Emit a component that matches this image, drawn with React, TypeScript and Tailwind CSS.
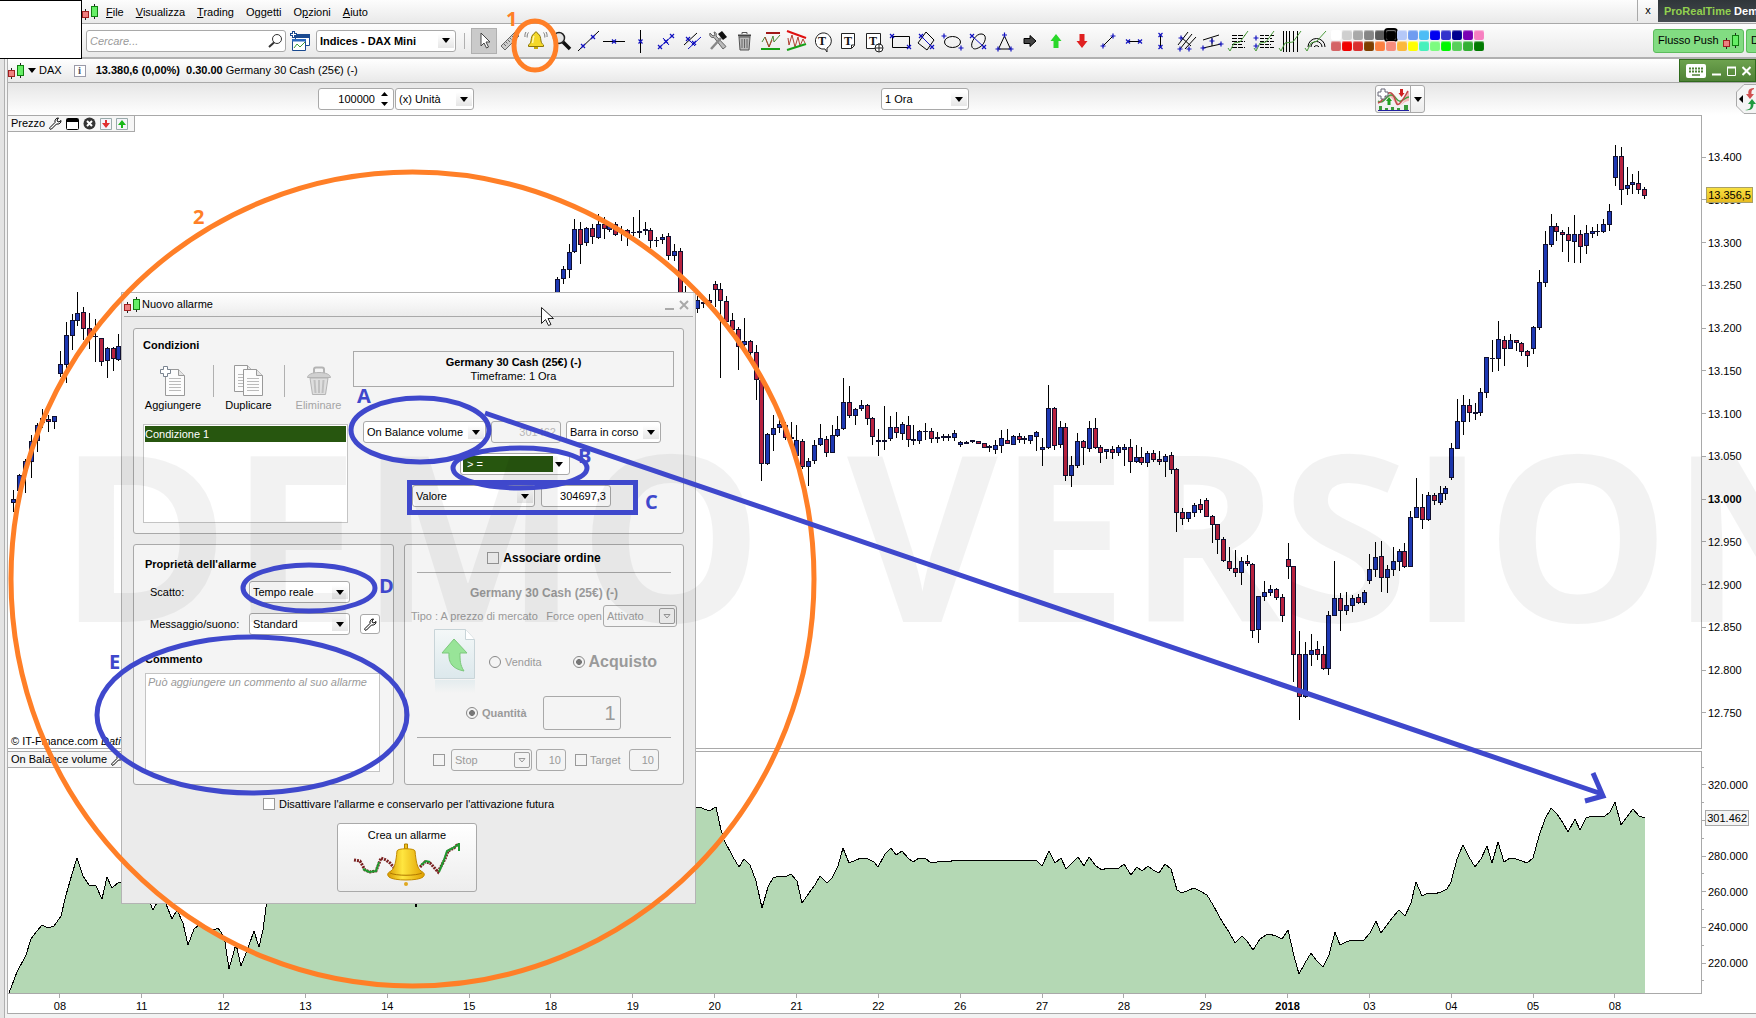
import React, { useState } from "react";
import clsx from "clsx";

type Bar = [number, number, number, number, number];

// high, body top, body bottom, low (ticks below the series origin), 1 = up, 0 = down, 2 = flat
const TICKS = 3;
const SERIES: { start: number; origin: number; bars: Bar[] }[] = [
  {
    start: -8,
    origin: 280,
    bars: [
      [630, 658, 670, 695, 1], [582, 586, 632, 662, 1], [537, 544, 574, 640, 1], [465, 484, 545, 594, 1],
      [430, 436, 482, 516, 1], [388, 415, 430, 445, 1], [404, 418, 425, 456, 0], [408, 409, 425, 446, 1],
      [213, 253, 281, 290, 1], [126, 166, 254, 308, 1], [103, 121, 167, 210, 1], [36, 99, 122, 138, 1],
      [82, 97, 146, 180, 0], [98, 145, 168, 207, 0], [118, 168, 172, 246, 2], [175, 175, 245, 258, 0],
      [202, 205, 242, 293, 1], [202, 205, 236, 272, 0], [163, 199, 239, 242, 1],
    ],
  },
  {
    start: 85,
    origin: 190,
    bars: [
      [262, 268, 340, 350, 1], [229, 238, 268, 281, 1], [163, 187, 239, 263, 1], [88, 118, 187, 190, 1],
      [96, 118, 164, 222, 0], [110, 115, 160, 168, 1], [103, 115, 140, 162, 0], [72, 103, 143, 147, 1],
      [82, 103, 118, 147, 0], [95, 103, 120, 125, 1], [95, 103, 134, 138, 0], [108, 121, 130, 152, 0],
      [118, 121, 137, 168, 0], [80, 127, 130, 138, 2], [60, 124, 130, 143, 1], [96, 118, 122, 134, 2],
      [115, 121, 152, 174, 0], [140, 151, 154, 172, 2], [132, 142, 151, 162, 1], [129, 139, 197, 209, 0],
      [163, 184, 197, 213, 1], [175, 184, 310, 320, 0], [288, 320, 345, 355, 0], [330, 340, 350, 360, 0],
      [318, 331, 356, 368, 1], [330, 335, 342, 354, 0], [312, 330, 340, 350, 0], [273, 283, 299, 350, 0],
      [279, 298, 332, 564, 0], [318, 333, 396, 405, 0], [369, 391, 419, 430, 0], [411, 418, 470, 540, 0],
      [384, 454, 466, 470, 1], [450, 454, 488, 500, 0], [465, 487, 569, 630, 0], [569, 570, 821, 873, 0],
      [729, 733, 821, 825, 1], [674, 715, 734, 784, 1], [690, 703, 715, 730, 1], [695, 705, 745, 750, 0],
      [697, 742, 748, 765, 0], [706, 751, 797, 800, 1], [748, 754, 832, 836, 0], [805, 814, 832, 888, 1],
      [750, 766, 812, 821, 1], [702, 745, 766, 768, 1], [739, 748, 788, 802, 0], [706, 736, 788, 790, 1],
      [678, 718, 737, 740, 1], [564, 637, 718, 720, 1], [588, 637, 677, 683, 0], [655, 658, 677, 704, 1],
      [630, 646, 658, 662, 1], [643, 646, 686, 705, 0], [680, 685, 740, 764, 0], [716, 751, 757, 798, 0],
      [648, 751, 757, 780, 1], [679, 712, 748, 752, 1],
    ],
  },
  {
    start: 143,
    origin: 370,
    bars: [
      [127, 172, 188, 203, 0], [155, 163, 191, 209, 1], [138, 166, 209, 231, 0], [165, 208, 212, 224, 2],
      [180, 184, 212, 221, 1], [159, 183, 186, 209, 2], [175, 184, 206, 218, 0], [186, 202, 206, 219, 2],
      [193, 199, 203, 213, 2], [193, 199, 203, 212, 2], [180, 190, 203, 212, 1], [213, 217, 224, 230, 1],
      [214, 217, 221, 222, 2], [210, 211, 215, 218, 2], [213, 214, 221, 222, 0], [219, 220, 233, 234, 0],
      [225, 229, 233, 246, 2], [210, 226, 239, 251, 1], [181, 205, 227, 248, 1], [176, 211, 221, 222, 0],
      [196, 199, 224, 225, 1], [189, 199, 209, 219, 0], [197, 205, 211, 222, 0], [195, 196, 212, 221, 1],
      [182, 187, 200, 243, 1], [204, 232, 239, 288, 1], [45, 115, 233, 238, 1], [111, 115, 227, 239, 0],
      [153, 172, 224, 234, 1], [160, 172, 317, 334, 0], [258, 286, 317, 351, 1], [190, 214, 287, 293, 1],
      [211, 214, 233, 285, 0], [153, 175, 236, 246, 1], [144, 175, 233, 236, 0], [226, 232, 248, 279, 0],
      [236, 238, 245, 267, 1], [228, 238, 248, 267, 0], [225, 232, 248, 258, 1], [222, 232, 239, 288, 1],
      [207, 232, 275, 309, 0], [224, 262, 275, 278, 1], [231, 262, 278, 284, 0], [244, 250, 278, 291, 1],
      [240, 250, 269, 275, 0], [243, 268, 275, 286, 0], [252, 259, 275, 321, 1], [246, 256, 299, 311, 0],
      [294, 298, 428, 486, 0], [414, 427, 446, 465, 0], [427, 427, 446, 455, 1], [400, 406, 428, 440, 1],
      [387, 403, 419, 430, 0], [384, 391, 440, 442, 0], [434, 439, 464, 518, 0], [462, 463, 509, 552, 0],
      [502, 508, 572, 575, 0], [531, 574, 596, 603, 0], [540, 595, 608, 620, 0], [561, 574, 608, 645, 1],
      [555, 574, 581, 587, 0], [579, 583, 782, 804, 0], [678, 679, 779, 819, 1], [633, 667, 680, 694, 1],
      [645, 658, 668, 678, 1], [653, 658, 683, 690, 0], [673, 682, 737, 756, 0], [519, 568, 590, 627, 0],
    ],
  },
  {
    start: 211,
    origin: 530,
    bars: [
      [109, 109, 374, 456, 0], [303, 373, 500, 570, 0], [336, 373, 500, 504, 1], [312, 361, 374, 407, 1],
      [333, 358, 374, 389, 0], [349, 373, 416, 419, 0], [243, 256, 416, 434, 1], [93, 205, 257, 258, 1],
      [190, 205, 242, 302, 0], [186, 226, 242, 254, 1], [195, 205, 227, 245, 1], [193, 202, 218, 221, 0],
      [180, 187, 218, 224, 1], [72, 118, 152, 161, 1], [36, 82, 119, 140, 1], [33, 79, 143, 185, 0],
      [105, 118, 143, 188, 1], [51, 94, 119, 139, 1], [57, 64, 95, 122, 1], [39, 64, 110, 114, 0],
      [-57, -38, 110, 111, 1],
    ],
  },
  {
    start: 232,
    origin: 130,
    bars: [
      [1044, 1132, 1163, 1165, 1], [1092, 1132, 1169, 1196, 0], [1086, 1096, 1169, 1174, 1], [1089, 1096, 1112, 1124, 0],
      [1068, 1090, 1118, 1124, 1], [1067, 1075, 1091, 1110, 1], [939, 955, 1043, 1049, 1], [807, 874, 956, 957, 1],
      [795, 826, 875, 914, 1], [807, 826, 848, 876, 0], [819, 847, 851, 869, 2], [774, 787, 848, 857, 1],
      [681, 682, 788, 803, 1], [630, 684, 687, 726, 2], [573, 628, 686, 723, 1], [618, 631, 656, 708, 0],
      [612, 631, 656, 657, 1], [630, 631, 638, 663, 0], [636, 640, 665, 678, 0], [660, 664, 677, 711, 0],
      [588, 592, 656, 672, 1], [420, 457, 593, 600, 1], [303, 343, 458, 470, 1], [252, 289, 344, 351, 1],
      [279, 289, 305, 333, 0], [300, 307, 314, 366, 0], [291, 313, 332, 396, 0], [255, 313, 335, 399, 1],
      [300, 313, 350, 399, 0], [285, 310, 347, 372, 1], [291, 304, 311, 324, 1], [282, 303, 307, 318, 2],
      [267, 283, 305, 308, 1], [222, 244, 284, 302, 1], [45, 79, 143, 168, 1], [51, 79, 179, 225, 0],
      [111, 166, 176, 195, 1], [132, 157, 164, 192, 1], [123, 160, 179, 192, 0], [171, 178, 197, 207, 0],
    ],
  },
];

const OBV =
  "9,993 17,972 26,955 31,939 37,931 42,925 48,928 54,926 61,916 66,895 72,874 77,858 83,876 89,885 96,886 102,899 107,877 112,888 119,882 125,884 140,890 150,903 153,910 160,897 166,904 172,919 177,910 183,923 188,945 194,929 200,924 206,928 214,930 218,928 221,932 225,942 229,969 236,944 241,966 248,948 254,931 259,947 263,930 267,900 269,880 410,880 414,900 416,907 419,899 430,870 690,807 " +
  "696,807 702,808 709,811 716,807 721,830 724,840 733,857 739,867 744,859 750,865 756,881 762,908 768,887 773,878 779,876 785,877 791,874 797,881 802,903 809,893 815,885 820,876 827,883 832,878 838,866 843,848 849,863 856,860 861,858 868,859 874,862 878,867 885,854 891,848 896,855 902,851 908,858 913,862 919,858 925,858 931,863 937,862 943,861 949,862 954,860 1036,860 1042,866 1049,851 1055,863 1061,858 1066,869 1072,863 1078,857 1084,866 1089,857 1096,866 1102,870 1107,868 1112,869 1119,868 1124,864 1131,875 1137,867 1142,871 1148,866 1153,870 1159,873 1165,864 1171,869 1177,890 1182,893 1189,890 1194,888 1200,891 1207,895 1213,905 1218,914 1223,923 1229,932 1235,943 1242,936 1247,941 1253,950 1260,939 1266,935 1269,934 1276,936 1282,939 1288,930 " +
  "1294,956 1299,974 1305,963 1311,953 1317,961 1323,967 1329,955 1335,932 1340,945 1346,942 1352,940 1358,941 1364,940 1370,933 1376,921 1381,933 1387,925 1393,917 1399,910 1405,916 1411,903 1416,882 1422,896 1428,893 1434,894 1441,892 1447,889 1451,882 1457,859 1463,845 1469,857 1475,867 1481,859 1487,846 1492,863 1498,842 1504,862 1510,858 1516,859 1522,861 1527,863 1533,858 1539,836 1545,819 1551,808 1557,814 1563,823 1568,832 1575,819 1580,830 1586,818 1592,816 1600,817 1605,816 1610,812 1615,802 1621,825 1627,817 1633,809 1639,816 1645,818";

const PRICES = ["13.400", "13.350", "13.300", "13.250", "13.200", "13.150", "13.100", "13.050", "13.000", "12.950", "12.900", "12.850", "12.800", "12.750"];
const VOLUMES = ["", "320.000", "", "300.000", "", "280.000", "", "260.000", "", "240.000", "", "220.000", ""];
const DAYS = ["08", "11", "12", "13", "14", "15", "18", "19", "20", "21", "22", "26", "27", "28", "29", "2018", "03", "04", "05", "08"];

const SWATCHES = [
  ["#ffffff", "#cfcfcf", "#a9a9a9", "#858585", "#5a5a5a", "#000000", "#b4c8f8", "#6f9cf0", "#4dbdf5", "#0000f0", "#3333cc", "#000090", "#7a00b4", "#f77fc0"],
  ["#d46466", "#f00000", "#d93030", "#7e3f00", "#fb8040", "#f68c7c", "#fbb93c", "#ffff00", "#48f0bc", "#7dfc80", "#00f800", "#58d05a", "#33b033", "#007a00"],
];

function Candles() {
  return (
    <svg width="16" height="16" viewBox="0 0 16 16" className="shrink-0">
      <path d="M3.5 5v11M12.5 0v15" stroke="#222" />
      <rect x="0.5" y="7.5" width="6" height="6" fill="#ee8080" stroke="#a02020" />
      <rect x="9.5" y="2.5" width="6" height="10" fill="#66ee66" stroke="#108010" />
    </svg>
  );
}

function Caret() {
  return (
    <svg width="8" height="5" viewBox="0 0 8 5" className="shrink-0">
      <path d="M0 0h8L4 5z" fill="#000" />
    </svg>
  );
}

function Wrench() {
  return (
    <svg width="13" height="13" viewBox="0 0 13 13" className="shrink-0">
      <path d="M1 10.5 6 5.5C5.500 3 7 .8 9.500 1L8 3l.5 1.500L10 5l2-1.500c.3 2.500-2 4-4.500 3.500l-5 5C1.500 13 0 11.500 1 10.500z" fill="#fff" stroke="#000" />
    </svg>
  );
}

function Select({ label, value, className, disabled }: { label: string; value: string; className: string; disabled?: boolean }) {
  return (
    <span className={clsx("relative block h-[22px] shrink-0", className)}>
      <select
        aria-label={label}
        disabled={disabled}
        className={clsx(
          "block h-full w-full appearance-none rounded-[3px] border border-[#a9a9a9] pl-[3px] pr-5 leading-4",
          disabled ? "bg-[#f4f4f4] text-[#9a9a9a]" : "bg-white text-black"
        )}
      >
        <option>{value}</option>
      </select>
      {disabled ? (
        <span className="pointer-events-none absolute right-0.5 top-[3px] flex size-4 items-center justify-center rounded-xs border border-[#a0a0a0]">
          <svg width="8" height="5" viewBox="0 0 8 5">
            <path d="M1 .5h6L4 4z" fill="none" stroke="#999" />
          </svg>
        </span>
      ) : (
        <span className="pointer-events-none absolute right-0.5 top-1 flex h-3.5 w-4 items-center justify-center bg-gradient-to-b from-white to-[#e6e6e6]">
          <Caret />
        </span>
      )}
    </span>
  );
}

// small blue anchor shown at the handles of a drawing tool
function Handle({ x, y }: { x: number; y: number }) {
  return <path d={`M${x - 2} ${y - 2}l4 4m0 -4l-4 4`} stroke="#1010c0" strokeWidth="1.2" />;
}

function Plus({ x, y }: { x: number; y: number }) {
  return <path d={`M${x - 2.5} ${y}h5M${x} ${y - 2.5}v5`} stroke="#1010c0" strokeWidth="1.2" />;
}

const TOOLS: { name: string; art: React.ReactNode }[] = [
  { name: "Selezione", art: <path d="M9 4v13l3-3 2.500 5 2-1-2.500-5h4z" fill="#fff" stroke="#444" /> },
  {
    name: "Righello",
    art: (
      <g stroke="#666" fill="#ccc">
        <path d="M3 17 17 3l4 4L7 21z" />
        <path d="m6 15 2 2m0-4 1.500 1.500M10 11l2 2m0-4 1.500 1.500M14 7l2 2" />
      </g>
    ),
  },
  {
    name: "Allarme",
    art: (
      <g>
        <path d="M12 3c-1 0-1.500.7-1.500 1.500C7.500 5.500 7.500 9 7 12c-.3 2-1.500 3-2.500 4v1.500h15V16c-1-1-2.200-2-2.500-4-.5-3-.5-6.500-3.500-7.500C13.500 3.700 13 3 12 3z" fill="#f4d828" stroke="#8a7408" />
        <path d="M10 7c-1 2-1 5-1.500 7" stroke="#fff8b0" strokeWidth="1.500" fill="none" />
        <path d="M10 18h4v2h-4z" fill="#c8a808" />
        <path d="M4.500 3.500c-1.200 1.500-1.500 3-1.300 5M2 3C1 4.500.8 6 1 8M19.500 3.500c1.200 1.500 1.500 3 1.300 5M22 3c1 1.500 1.200 3 1 5" fill="none" stroke="#777" />
      </g>
    ),
  },
  {
    name: "Zoom",
    art: (
      <g>
        <path d="m13 13 7 7" stroke="#111" strokeWidth="3.500" />
        <circle cx="9" cy="9" r="5.500" fill="#e4e4e4" stroke="#222" strokeWidth="1.500" />
      </g>
    ),
  },
  { name: "Segmento", art: <g><path d="M2 22 23 2" stroke="#000" /><Handle x={7} y={17} /><Handle x={17} y={8} /></g> },
  { name: "Orizzontale", art: <g><path d="M1 12.500h22" stroke="#000" /><Handle x={12} y={12.5} /></g> },
  { name: "Verticale", art: <g><path d="M12.500 1v23" stroke="#000" /><Handle x={12.5} y={12.5} /></g> },
  { name: "Perpendicolare", art: <g><path d="M6 18 18 7M9 9l6 7" stroke="#1010c0" /><Handle x={6} y={18} /><Handle x={18} y={7} /><Handle x={12} y={12.5} /></g> },
  { name: "Parallele", art: <g><path d="M4 16 17 4" stroke="#000" /><path d="M8 20 21 8M6 8l9 9" stroke="#1010c0" /><Handle x={8} y={10} /><Handle x={14} y={14} /></g> },
  {
    name: "Proprietà",
    art: (
      <g>
        <path d="M4 4c-1 3 1 5 4 4.500L17 20l3-2.500L10 7c1-2 0-4-2-4l1 3-2 1z" fill="#bbb" stroke="#666" />
        <path d="m5 20 10-11" stroke="#888" strokeWidth="2.500" />
        <path d="m12 5 4-3 5 6-4 3z" fill="#111" />
      </g>
    ),
  },
  {
    name: "Elimina",
    art: (
      <g stroke="#555">
        <path d="M7 8h11l-1 13H8z" fill="#bbb" />
        <path d="M10 10v9M12.500 10v9M15 10v9" stroke="#666" />
        <path d="M6 6.500h13" strokeWidth="2" stroke="#444" />
        <path d="M10 5V3.500h5V5" fill="none" />
      </g>
    ),
  },
  { name: "Supporto", art: <g fill="none"><path d="m4 13 3-5 4 10 4-11 1 6 6-7" stroke="#4a8a3a" /><path d="m7 8 4 10 3-7" stroke="#b04030" /><path d="M8 4h14" stroke="#a01818" strokeWidth="2" /><path d="M3 20h19" stroke="#18a018" strokeWidth="2" /></g> },
  { name: "Triangolo", art: <g fill="none"><path d="m4 9 1 7 3-10 3 12 3-10 2 9 3-7 2 4" stroke="#b04030" /><path d="m3 2 19 7" stroke="#e01010" strokeWidth="2" /><path d="m3 21 19-6" stroke="#18a018" strokeWidth="2" /></g> },
  {
    name: "Nota",
    art: (
      <g>
        <path d="M12 4a8 8 0 1 0 3 16l2 3v-4a8 8 0 0 0-5-15z" fill="#fff" stroke="#222" />
        <text x="12" y="16" textAnchor="middle" fill="#111" className="font-['Liberation_Serif'] text-[12px] font-bold">T</text>
      </g>
    ),
  },
  {
    name: "Testo",
    art: (
      <g>
        <path d="M5.500 4.500h13v12l-3 3h-10zM15.500 19v-3h3" fill="#fff" stroke="#222" />
        <text x="12" y="16" textAnchor="middle" fill="#111" className="font-['Liberation_Serif'] text-[12px] font-bold">T</text>
      </g>
    ),
  },
  {
    name: "Testo ancorato",
    art: (
      <g>
        <path d="M4.500 4.500h14v15h-14z" fill="#fff" stroke="#222" />
        <text x="11" y="16" textAnchor="middle" fill="#111" className="font-['Liberation_Serif'] text-[12px] font-bold">T</text>
        <circle cx="17" cy="19" r="4" fill="#fff" stroke="#222" />
        <path d="M17 14v9M13 19h8" stroke="#222" />
      </g>
    ),
  },
  { name: "Rettangolo", art: <g><path d="M4.500 7.500h17v11h-17z" fill="none" stroke="#000" /><Handle x={4} y={7} /><Handle x={21} y={18} /></g> },
  { name: "Rombo", art: <g><path d="m4 14 8-11 8 8-7 10z" fill="none" stroke="#000" /><path d="m6 6 12 12" stroke="#1010c0" /><Handle x={7} y={7} /><Handle x={18} y={18} /></g> },
  { name: "Ellisse", art: <g><ellipse cx="12.500" cy="13" rx="8" ry="5.500" fill="none" stroke="#000" /><Plus x={4} y={7} /><Plus x={21} y={19} /></g> },
  { name: "Ellisse ruotata", art: <g><path d="M6 18c-2-4 4-14 10-13s3 10-2 13-7 2-8 0z" fill="none" stroke="#000" /><path d="m6 7 12 11" stroke="#1010c0" /><Handle x={6} y={7} /><Handle x={18} y={18} /></g> },
  { name: "Triangolo libero", art: <g><path d="m12.500 7 6 13h-12z" fill="none" stroke="#000" /><Plus x={12.5} y={6} /><Plus x={6} y={20} /><Plus x={19} y={20} /></g> },
  { name: "Freccia", art: <path d="M6 9.500h6v-3l6 5.500-6 5.500v-3H6z" fill="#444" stroke="#000" /> },
  { name: "Freccia su", art: <path d="m12 5 5.500 7h-3v7h-5v-7h-3z" fill="#2ad82a" /> },
  { name: "Freccia giù", art: <path d="m12 19-5.500-7h3V5h5v7h3z" fill="#e02020" /> },
  { name: "Tratto", art: <g><path d="M7 17 17 7" stroke="#000" /><Plus x={7} y={17} /><Plus x={17} y={7} /></g> },
  { name: "Tratto orizzontale", art: <g><path d="M6 12.500h12" stroke="#000" /><Handle x={6} y={12.5} /><Handle x={18} y={12.5} /></g> },
  { name: "Tratto verticale", art: <g><path d="M12.500 6v12" stroke="#000" /><Handle x={12.5} y={6} /><Handle x={12.5} y={18} /></g> },
  { name: "Forchetta", art: <g><path d="M6 20 18 5M11 20 22 8M4 16 14 3M7 8l10 9" stroke="#000" /><Plus x={6} y={20} /><Plus x={15} y={20} /><Plus x={7} y={9} /></g> },
  { name: "Canale", art: <g><path d="m3 19 18-4M3 11l16-5M12 9v8" stroke="#000" /><Plus x={3} y={19} /><Plus x={21} y={15} /><Plus x={12} y={12} /></g> },
  { name: "Fibonacci", art: <g fill="none"><path d="M6 6.500h13M6 9.500h11M6 12.500h13M6 15.500h10M6 18.500h13" stroke="#000" strokeDasharray="5 1" /><path d="m2 19 2 3 4-8 6-1 8-11" stroke="#4a9a3a" /></g> },
  { name: "Estensioni", art: <g fill="none"><path d="M8 6.500h14M8 9.500h12M8 12.500h14M8 15.500h11M8 18.500h14" stroke="#000" strokeDasharray="4 1" /><path d="m2 19 2 3 4-8 6-1 8-11" stroke="#4a9a3a" /><Plus x={4} y={9} /><Plus x={4} y={17} /></g> },
  { name: "Cicli", art: <g fill="none"><path d="M5.500 2v21M8.500 2v21M11.500 2v21M15.500 2v21M19.500 2v21" stroke="#000" /><path d="m1 19 2 3 4-8 8-1 8-11" stroke="#4a9a3a" /></g> },
  { name: "Archi", art: <g fill="none"><path d="M4 18a8 8 0 0 1 17 0M7 18a5.500 5.500 0 0 1 11 0M10 18a3 3 0 0 1 5 0" stroke="#000" /><path d="m1 19 2 3 4-8 6-2 9-10" stroke="#4a9a3a" /></g> },
];

function MenuBar() {
  const items = [
    ["", "F", "ile"], ["", "V", "isualizza"], ["", "T", "rading"], ["O", "gg", "etti"], ["O", "p", "zioni"], ["", "A", "iuto"],
  ];
  return (
    <div className="flex h-6 items-center border-b border-[#a9a9a9] bg-gradient-to-b from-[#fdfdfd] to-[#e9e9e9]">
      <Candles />
      <nav className="flex gap-3 pl-2">
        {items.map(([pre, key, post]) => (
          <button key={key} type="button" className="leading-4">
            {pre}<u>{key}</u>{post}
          </button>
        ))}
      </nav>
      <div className="ml-auto flex h-full items-start">
        <button type="button" className="h-[21px] w-[21px] border-l border-[#a9a9a9]">x</button>
        <div className="h-[22px] w-[98px] overflow-hidden whitespace-nowrap bg-gradient-to-b from-[#30363a] to-[#454b50] pl-1.5 font-bold leading-[22px] text-white">
          <span className="text-[#92d050]">ProRealTime</span> Demo
        </div>
      </div>
    </div>
  );
}

function ToolBar() {
  const [tool, setTool] = useState("Selezione");
  return (
    <div className="flex h-[35px] items-center border-b-2 border-[#b0b0b0] bg-gradient-to-b from-[#fdfdfd] to-[#e9e9e9]">
      <div className="relative ml-1 h-[22px] w-[200px] shrink-0">
        <input aria-label="Cercare" placeholder="Cercare..." className="block h-full w-full rounded-[3px] border border-[#a9a9a9] bg-white px-[3px] italic placeholder:text-[#9a9a9a]" />
        <svg width="15" height="15" viewBox="0 0 15 15" className="absolute right-[3px] top-[3px]">
          <circle cx="9" cy="6" r="4.500" fill="#fff" stroke="#333" />
          <path d="M6 9.500 1 14" stroke="#333" strokeWidth="2" />
        </svg>
      </div>
      <button type="button" aria-label="Nuovo grafico" className="ml-1 mr-1.5 shrink-0">
        <svg width="20" height="20" viewBox="0 0 20 20">
          <path d="M5.500 3.500h14v11h-14z" fill="#fff" stroke="#1a4a90" />
          <path d="M5 3h15v4H5z" fill="#1a4a90" />
          <path d="M2.500 8.500h13v11h-13z" fill="#fff" stroke="#1a4a90" />
          <path d="M2 8h14v2.500H2z" fill="#2a6ac0" />
          <path d="m4 17 3-4 3 3 5-5" fill="none" stroke="#3a9a3a" />
          <path d="M3.500 0v7M0 3.500h7" stroke="#1a4a90" strokeWidth="3" />
          <path d="M3.500 1v5M1 3.500h5" stroke="#fff" />
        </svg>
      </button>
      <Select label="Lista" value="Indices - DAX Mini" className="w-[140px] font-bold" />
      <span className="ml-2 mr-1.5 h-4 w-px bg-[#b0b0b0]" />
      <div className="flex shrink-0">
        {TOOLS.map((t) => (
          <button
            key={t.name}
            type="button"
            aria-label={t.name}
            onClick={() => setTool(t.name)}
            className={clsx("flex size-[26px] items-center justify-center", tool === t.name && "border border-[#b0b0b0] bg-[#cacaca]")}
          >
            <svg width="24" height="24" viewBox="0 0 24 24" fill="none" className="shrink-0">{t.art}</svg>
          </button>
        ))}
      </div>
      <div className="ml-[2px] flex shrink-0 flex-col gap-px">
        {SWATCHES.map((row, r) => (
          <div key={r} className="flex gap-px">
            {row.map((c) => (
              <button
                key={c}
                type="button"
                aria-label={c}
                className={clsx("size-2.5 rounded-xs shadow-[inset_0_1px_1px_rgba(255,255,255,0.5)]", c === "#000000" && "outline-2 outline-black")}
                style={{ backgroundColor: c }}
              />
            ))}
          </div>
        ))}
      </div>
      <div className="ml-auto flex shrink-0 gap-0.5">
        <button type="button" className="flex h-6 w-[91px] items-center justify-between rounded-[3px] border border-[#5cbc5c] bg-[#82dc82] px-1">
          Flusso Push <Candles />
        </button>
        <button type="button" className="h-6 w-[10px] overflow-hidden rounded-l-[3px] border border-r-0 border-[#5cbc5c] bg-[#82dc82] pl-1 text-left">D</button>
      </div>
    </div>
  );
}

function TitleRow() {
  return (
    <div className="flex h-6 items-center border-b border-[#a9a9a9] bg-gradient-to-b from-white to-[#e9e9e9]">
      <Candles />
      <button type="button" className="ml-1 flex items-center gap-[3px]"><Caret /> DAX</button>
      <span className="ml-3 mr-2.5 flex size-3 items-center justify-center border border-[#9a9aa8] bg-white font-['Liberation_Serif'] font-bold text-[#556]">i</span>
      <b>13.380,6 (0,00%)</b>
      <b className="ml-1.5">0.30.00</b>
      <span className="ml-[3px]">Germany 30 Cash (25€) (-)</span>
      <div className="ml-auto flex h-full w-[77px] items-center gap-1.5 border border-[#2f6a1c] bg-gradient-to-b from-[#6da24e] to-[#4f8236] pl-1.5 text-white">
        <button type="button" aria-label="Tastiera">
          <svg width="20" height="14" viewBox="0 0 20 14">
            <rect width="20" height="14" rx="2" fill="#fff" />
            <path d="M3 4.500h14M3 7.500h14" stroke="#4f8236" strokeWidth="2" strokeDasharray="2 1" />
            <path d="M6 11h8" stroke="#4f8236" strokeWidth="1.500" />
          </svg>
        </button>
        <button type="button" aria-label="Riduci"><svg width="9" height="10"><path d="M0 8.500h9" stroke="#fff" strokeWidth="2" /></svg></button>
        <button type="button" aria-label="Ingrandisci"><svg width="9" height="10"><path d="M.5 1.500h8v8h-8z" fill="none" stroke="#fff" /><path d="M0 1.500h9" stroke="#fff" strokeWidth="2" /></svg></button>
        <button type="button" aria-label="Chiudi"><svg width="9" height="10"><path d="m.5 1 8 8m0-8-8 8" stroke="#fff" strokeWidth="2" /></svg></button>
      </div>
    </div>
  );
}

function ChartHeader() {
  return (
    <div className="relative flex h-8 items-center bg-gradient-to-b from-[#e6e6e6] to-white">
      <div className="ml-[310px] flex h-[22px] w-[76px] shrink-0 items-center rounded-[3px] border border-[#a9a9a9] bg-white">
        <input aria-label="Numero di unità" defaultValue="100000" className="w-14 text-right" />
        <svg width="7" height="14" viewBox="0 0 7 14" className="ml-1.5">
          <path d="M0 4h7L3.500 0zM0 10h7l-3.500 4z" fill="#000" />
        </svg>
      </div>
      <Select label="Tipo di unità" value="(x) Unità" className="ml-px w-[79px]" />
      <Select label="Timeframe" value="1 Ora" className="ml-[407px] w-[88px]" />
      <button type="button" aria-label="Indicatori" className="ml-[406px] flex h-7 w-[50px] shrink-0 items-center rounded-[3px] border border-[#a9a9a9] bg-gradient-to-b from-white to-[#ececec]">
        <svg width="34" height="24" viewBox="0 0 34 24" fill="none">
          <path d="M2 13c6 6 10-8 15-6s4 12 8 10 4-8 8-13v10c-5 0-6 4-10 4S16 9 13 10 6 20 2 13z" fill="#f4b8b8" />
          <path d="M2 14c6 4 8-6 13-6s6 8 10 6 5-4 8-4" stroke="#40a040" strokeWidth="1.500" />
          <path d="M2 16c6-2 8-12 13-10s4 14 8 11 6-8 9-13" stroke="#c04848" strokeWidth="1.500" />
          <path d="M3 23v-4h3v4m3 0v-2h3v2m3 0v-3h3v3m3 0v-2h3v2m4 0v-5h4v5" fill="#3a9a3a" />
          <path d="M2 23.500h31" stroke="#2020a0" />
          <path d="m13 10 3 4h-1.500v4h-3v-4H10z" fill="#20a020" />
          <path d="M24 2h3v4h1.500L25.500 10l-3-4H24z" fill="#d02020" />
          <path d="M5 2h4v3h3v4H9v3H5V9H2V5h3z" fill="#fff" stroke="#667" />
        </svg>
        <span className="flex h-full flex-1 items-center justify-center border-l border-[#a9a9a9]"><Caret /></span>
      </button>
      <button type="button" aria-label="Pannello ordini" className="ml-auto h-[30px] w-[20px] overflow-hidden">
        <svg width="20" height="30" viewBox="0 0 20 30">
          <path d="M20 .5H8L.5 8v14L8 29.500h12" fill="#f4f4f4" stroke="#a9a9a9" />
          <path d="M7 11v8l-4-4z" fill="#000" />
          <path d="M18 4c-6 0-6 4-5.500 6H10l4 5 4-5h-2.500c0-3 0-4 2.500-5z" fill="#d05050" />
          <path d="M9 26c6 0 6-4 5.500-6H12l4-5 4 5h-2.500c0 4-2 7-8.500 6z" fill="#209a40" />
        </svg>
      </button>
    </div>
  );
}

function PanelTag({ title, full }: { title: string; full?: boolean }) {
  return (
    <div className={clsx("absolute left-0 top-0 flex h-[17px] items-center gap-1 border-b border-t border-r border-[#a9a9a9] bg-[#f6f6f6] pl-[3px]", full ? "w-[127px]" : "w-[140px]")}>
      {title}
      <Wrench />
      {full && (
        <>
          <svg width="13" height="12" viewBox="0 0 13 12"><rect x=".5" y=".5" width="12" height="11" rx="1" fill="#fff" stroke="#000" /><path d="M1 1h11v3H1z" fill="#000" /></svg>
          <svg width="13" height="13" viewBox="0 0 13 13"><circle cx="6.500" cy="6.500" r="6" fill="#333" /><path d="m4 4 5 5m0-5-5 5" stroke="#fff" strokeWidth="2" /></svg>
          <svg width="12" height="12" viewBox="0 0 12 12"><path d="M.5.5h11v11H.5z" fill="#f4f4fa" stroke="#9aa" /><path d="M5 2h2v3h3l-4 5-4-5h3z" fill="#e03030" /></svg>
          <svg width="12" height="12" viewBox="0 0 12 12"><path d="M.5.5h11v11H.5z" fill="#f4f4fa" stroke="#9aa" /><path d="M5 10h2V7h3L6 2 2 7h3z" fill="#18b818" /></svg>
        </>
      )}
    </div>
  );
}

function PriceChart() {
  return (
    <svg viewBox="8 116 1693 632" preserveAspectRatio="none" shapeRendering="crispEdges" className="block h-full w-full">
      {SERIES.flatMap(({ start, origin, bars }) =>
        bars.map(([high, top, bottom, low, kind], n) => {
          const x = Math.floor(60.4 + 5.846 * (start + n));
          const y = (v: number) => Math.round(origin + v / TICKS);
          const h = Math.max(1, y(bottom) - y(top));
          return (
            <g key={start + n}>
              <rect x={x} y={y(high)} width="1" height={Math.max(1, y(low) - y(high))} fill="#000" />
              <rect x={x - 2} y={y(top)} width="5" height={h} fill="#101030" />
              {kind !== 2 && h > 2 && <rect x={x - 1} y={y(top) + 1} width="3" height={h - 2} fill={kind ? "#1d38b4" : "#b8223f"} />}
            </g>
          );
        })
      )}
    </svg>
  );
}

function Axis({ labels, bold, minor, className }: { labels: string[]; bold: string; minor?: boolean; className: string }) {
  return (
    <div className={clsx("flex h-full w-[55px] shrink-0 flex-col justify-between border-l border-[#a9a9a9]", className)}>
      {labels.map((l, i) => (
        <div key={i} className={clsx("flex h-3.5 items-center gap-0.5 leading-[14px]", l === bold && "font-bold")}>
          <span className={clsx("h-px bg-[#a9a9a9]", minor && !l ? "w-0.5" : "w-1")} />
          {l}
        </div>
      ))}
    </div>
  );
}

function ChartArea() {
  return (
    <div className="bg-white">
      <div className="relative flex h-[634px]">
        <div className="min-w-0 flex-1 border-y border-[#a9a9a9]">
          <PriceChart />
        </div>
        <Axis labels={PRICES} bold="13.000" className="pb-[29px] pt-[35px]" />
        <PanelTag title="Prezzo" full />
        <div className="absolute bottom-0 left-[3px] leading-4">© IT-Finance.com <i>Dati indicativi</i></div>
        <span className="absolute right-[3px] top-[72px] h-4 border border-[#a9a066] bg-gradient-to-b from-[#f8e040] to-[#e8bc20] px-px leading-[14px]">13.356,5</span>
      </div>
      <div className="relative mt-0.5 flex h-[243px]">
        <div className="min-w-0 flex-1 border-y border-[#a9a9a9]">
          <svg viewBox="8 752 1693 241" preserveAspectRatio="none" className="block h-full w-full">
            <polygon points={`${OBV} 1645,993`} fill="#b4d8b4" />
            <polyline points={OBV} fill="none" stroke="#000" shapeRendering="crispEdges" />
          </svg>
        </div>
        <Axis labels={VOLUMES} bold="300.000" minor className="pb-1.5 pt-[9px]" />
        <PanelTag title="On Balance volume" />
        <span className="absolute right-[7px] top-[59px] h-4 border border-[#a9a9a9] bg-[#f4f4f4] px-px leading-[14px]">301.462</span>
      </div>
      <div className="flex h-5 border-b border-[#a9a9a9] pl-[11px] pr-[100px]">
        {DAYS.map((d, i) => (
          <div key={i} className={clsx("flex flex-1 flex-col items-center leading-4", d === "2018" && "font-bold")}>
            <span className="h-1 w-px shrink-0 bg-[#a9a9a9]" />
            {d}
          </div>
        ))}
      </div>
    </div>
  );
}

const group = "rounded-[3px] border border-[#a9a9a9] bg-[#f4f4f4]";
const box = "size-3 shrink-0 appearance-none border border-[#999]";
const radio = "size-3 shrink-0 appearance-none rounded-full border border-[#888] checked:bg-[radial-gradient(circle,#777_38%,transparent_44%)]";
const field = "rounded-[3px] border border-[#a9a9a9] px-1 text-right";

function Page({ x, y }: { x: number; y: number }) {
  return (
    <g transform={`translate(${x} ${y})`} stroke="#999">
      <path d="M.5.500h13l6 6v20H.5z" fill="#fcfcfc" />
      <path d="M13.500.500v6h6" fill="#e4e4e4" />
      <path d="M4 9.500h12M4 12.500h12M4 15.500h12M4 18.500h12M4 21.500h12" stroke="#bbb" />
    </g>
  );
}

function Conditions() {
  return (
    <section className={clsx(group, "flex h-[206px] pl-[9px]")}>
      <div className="w-[210px] shrink-0 pt-2">
        <h3 className="font-bold leading-4">Condizioni</h3>
        <div className="mt-3 grid grid-cols-[70px_71px_69px]">
          <button type="button" className="pr-2.5 leading-4">
            <span className="flex h-8 justify-center">
              <svg width="28" height="32" viewBox="0 0 28 32">
                <Page x={6} y={4} />
                <path d="M4.500 1.500h4v3h3v4h-3v3h-4v-3h-3v-4h3z" fill="#fff" stroke="#7a8490" />
              </svg>
            </span>
            Aggiungere
          </button>
          <button type="button" className="leading-4">
            <span className="flex h-8 justify-center border-l border-[#b0b0b0]">
              <svg width="30" height="32" viewBox="0 0 30 32"><Page x={0} y={0} /><Page x={9} y={4} /></svg>
            </span>
            Duplicare
          </button>
          <button type="button" disabled className="leading-4 text-[#a4a4a4]">
            <span className="flex h-8 justify-center border-l border-[#b0b0b0]">
              <svg width="26" height="32" viewBox="0 0 26 32" fill="none" stroke="#b4b4b4">
                <path d="M8 8V4.500C8 3 9 2.500 10 2.500h6c1 0 2 .5 2 2V8" strokeWidth="2" />
                <path d="M4 13h18l-2.500 16.500h-13z" fill="#dedede" />
                <path d="M1.500 12.500c0-3 5-5 11.500-5s11.500 2 11.500 5z" fill="#d0d0d0" />
                <path d="M8.500 15l1 13M13 15v13M17.500 15l-1 13" strokeWidth="2" stroke="#c0c0c0" />
              </svg>
            </span>
            Eliminare
          </button>
        </div>
        <ul className="mt-[11px] h-[99px] w-[205px] border border-[#c4c4c4] bg-white p-px">
          <li className="h-4 bg-[#27560f] leading-4 text-white">Condizione 1</li>
        </ul>
      </div>
      <div className="pt-[22px]">
        <div className="h-9 w-[321px] border border-[#a9a9a9] pt-[3px] text-center leading-[14px]">
          <b>Germany 30 Cash (25€) (-)</b>
          <div>Timeframe: 1 Ora</div>
        </div>
        <div className="mt-[34px] flex flex-col gap-2.5">
          <div className="ml-2.5 flex gap-[5px]">
            <Select label="Indicatore" value="On Balance volume" className="w-[123px]" />
            <input aria-label="Valore corrente" disabled defaultValue="301462" className={clsx(field, "w-[70px] text-[#b8b8b8]")} />
            <Select label="Barra" value="Barra in corso" className="w-[95px]" />
          </div>
          <div className="relative ml-[107px] h-[22px] w-[110px] rounded-[3px] border border-[#a9a9a9] bg-white p-[2px]">
            <select aria-label="Operatore" className="block h-4 w-[90px] appearance-none bg-[#27560f] pl-1 leading-4 text-white">
              <option>&gt; =</option>
            </select>
            <span className="pointer-events-none absolute right-1.5 top-2"><Caret /></span>
          </div>
          <div className="ml-[59px] flex gap-1.5">
            <Select label="Confronto" value="Valore" className="w-[123px]" />
            <input aria-label="Soglia" defaultValue="304697,3" className={clsx(field, "w-[70px] bg-white")} />
          </div>
        </div>
      </div>
    </section>
  );
}

function AlarmProperties() {
  return (
    <section className={clsx(group, "h-[241px] w-[261px] pl-[11px] pt-[11px]")}>
      <h3 className="font-bold leading-4">Proprietà dell'allarme</h3>
      <div className="mt-[9px] flex items-center pl-[5px]">
        <span className="w-[99px]">Scatto:</span>
        <Select label="Scatto" value="Tempo reale" className="w-[101px]" />
      </div>
      <div className="mt-2.5 flex items-center pl-[5px]">
        <span className="w-[99px]">Messaggio/suono:</span>
        <Select label="Messaggio/suono" value="Standard" className="w-[101px]" />
        <button type="button" aria-label="Configura" className="ml-2.5 flex size-5 items-center justify-center rounded-[3px] border border-[#a9a9a9] bg-white"><Wrench /></button>
      </div>
      <label htmlFor="comment" className="mt-4 block font-bold leading-4">Commento</label>
      <textarea
        id="comment"
        placeholder="Può aggiungere un commento al suo allarme"
        className="mt-1.5 block h-[99px] w-[235px] resize-none border border-[#c4c4c4] bg-white px-0.5 italic leading-4 placeholder:text-[#9a9a9a]"
      />
    </section>
  );
}

function LinkedOrder() {
  return (
    <section className={clsx(group, "h-[241px] w-[280px] pt-[5px] text-[#9a9a9a]")}>
      <label className="flex items-center justify-center gap-1 text-[12px] font-bold leading-4 text-black">
        <input type="checkbox" className={box} /> Associare ordine
      </label>
      <hr className="mx-3 mt-1.5 border-[#a9a9a9]" />
      <div className="mt-3 text-center text-[12px] font-bold leading-4">Germany 30 Cash (25€) (-)</div>
      <div className="mt-1 flex items-center pl-1.5 pr-1.5">
        <span className="whitespace-nowrap">Tipo : A prezzo di mercato</span>
        <span className="ml-auto whitespace-nowrap pr-px">Force open</span>
        <Select label="Force open" value="Attivato" disabled className="w-[74px]" />
      </div>
      <div className="mt-0.5 flex h-[66px] items-center pl-7">
        <svg width="44" height="66" viewBox="0 0 44 66">
          <defs>
            <linearGradient id="sheet" x1="0" y1="0" x2="0" y2="1"><stop offset="0" stopColor="#f4f8f8" /><stop offset="1" stopColor="#dce8ec" /></linearGradient>
            <linearGradient id="mirror" x1="0" y1="0" x2="0" y2="1"><stop offset="0" stopColor="#e4ecee" /><stop offset="1" stopColor="#f4f4f4" /></linearGradient>
          </defs>
          <path d="M2 51h40v13H2z" fill="url(#mirror)" />
          <path d="M1.500.500h31l9 10v39h-40z" fill="url(#sheet)" stroke="#c8d4d8" />
          <path d="M32.500.500v10h9" fill="#fff" stroke="#c8d4d8" />
          <path d="m21 10 13 14h-7c0 7 0 12 4 18-11-2-16-8-15-18H9z" fill="#98e498" stroke="#7cc87c" />
        </svg>
        <label className="ml-3 flex items-center gap-1"><input type="radio" name="side" disabled className={radio} /> Vendita</label>
        <label className="ml-auto mr-[26px] flex items-center gap-1 text-[16px] font-bold"><input type="radio" name="side" disabled defaultChecked className={radio} /> Acquisto</label>
      </div>
      <div className="mt-px flex items-center pl-[61px]">
        <label className="flex items-center gap-1 font-bold"><input type="radio" name="size" disabled defaultChecked className={radio} /> Quantità</label>
        <input aria-label="Quantità" disabled defaultValue="1" className={clsx(field, "ml-4 h-[34px] w-[78px] text-[20px]")} />
      </div>
      <hr className="mx-3 mt-[7px] border-[#a9a9a9]" />
      <div className="mt-[11px] flex items-center pl-7 pr-6">
        <input type="checkbox" aria-label="Stop" disabled className={box} />
        <Select label="Tipo di stop" value="Stop" disabled className="ml-1.5 mr-1 w-[81px]" />
        <input aria-label="Distanza stop" disabled defaultValue="10" className={clsx(field, "h-[22px] w-[30px]")} />
        <label className="ml-[9px] flex items-center gap-[3px]"><input type="checkbox" disabled className={box} /> Target</label>
        <input aria-label="Distanza target" disabled defaultValue="10" className={clsx(field, "ml-auto h-[22px] w-[30px]")} />
      </div>
    </section>
  );
}

function AlarmDialog() {
  return (
    <div role="dialog" aria-label="Nuovo allarme" className="absolute left-[121px] top-[292px] h-[612px] w-[575px] border border-[#b4b4b4] bg-[#ebebeb]">
      <div className="mx-0.5 flex h-6 items-center gap-0.5 border-b border-[#a9a9a9] bg-gradient-to-b from-white to-[#ececec]">
        <Candles /> Nuovo allarme
        <svg width="26" height="10" viewBox="0 0 26 10" className="ml-auto mr-[3px]" fill="none" stroke="#a9a9a9" strokeWidth="2">
          <path d="M1 9h9M16 1l8 8m0-8-8 8" />
        </svg>
      </div>
      <div className="px-[11px] pt-[11px]">
        <Conditions />
        <div className="mt-2.5 flex justify-between">
          <AlarmProperties />
          <LinkedOrder />
        </div>
        <label className="mt-[11px] flex items-center justify-center gap-1 leading-4">
          <input type="checkbox" className={clsx(box, "bg-white")} /> Disattivare l'allarme e conservarlo per l'attivazione futura
        </label>
        <button type="button" className="ml-[204px] mt-[11px] flex h-[69px] w-[140px] flex-col items-center rounded-[3px] border border-[#a9a9a9] bg-gradient-to-b from-white to-[#ededed] pt-[3px] leading-4">
          Crea un allarme
          <svg width="108" height="44" viewBox="0 0 108 44" fill="none">
            <defs>
              <linearGradient id="bell" x1="0" y1="0" x2="1" y2="0"><stop offset="0" stopColor="#d89800" /><stop offset=".4" stopColor="#ffe640" /><stop offset="1" stopColor="#e0a000" /></linearGradient>
            </defs>
            <path d="m1 17 6 1 5 9 5 2 6-1 5-13 5 2 4 3 5 6M67 24l5-5 5 1 8 9 7-13 3-8 6-3 5-5" stroke="#7a2020" strokeWidth="3" strokeDasharray="2 1" />
            <path d="m10 26 6 3 7-1 3-9M68 22l5-4 4 1M86 29l5-12 3-9 6-3 6-4v7" stroke="#209a30" strokeWidth="2" />
            <path d="M51.500 1h3v5h-3z" fill="#f0c020" stroke="#b08000" />
            <path d="M44 8c0-3 18-3 18 0 1 10 2 17 6 20 4 2 4 4 2 6-4 4-30 4-34 0-2-2-2-4 2-6 4-3 5-10 6-20z" fill="url(#bell)" stroke="#c08a00" />
            <path d="M37 30c6 3 26 3 32 0" stroke="#b07800" />
            <circle cx="53" cy="41" r="2" fill="#e0a820" />
          </svg>
        </button>
      </div>
    </div>
  );
}

function Annotations() {
  const letters: [string, number, number][] = [["A", 357, 403], ["B", 578, 463], ["C", 645, 509], ["D", 379, 593], ["E", 109, 669]];
  return (
    <svg width="1756" height="1018" viewBox="0 0 1756 1018" fill="none" className="pointer-events-none absolute left-0 top-0">
      <path d="M541.500 307.500v16l4-4 3 6 2.500-1-3-6h5.500z" fill="#fff" stroke="#222" />
      <g stroke="#ff7f27" strokeWidth="5">
        <ellipse cx="412.500" cy="579" rx="401.500" ry="407" />
        <ellipse cx="535" cy="45.500" rx="21" ry="24.500" />
      </g>
      <g stroke="#3f48cc" strokeWidth="5">
        <ellipse cx="420" cy="430" rx="69" ry="32" />
        <ellipse cx="520" cy="468" rx="67" ry="20" />
        <path d="M409.500 482.500h226v30h-226z" />
        <ellipse cx="309" cy="588" rx="66" ry="23" />
        <ellipse cx="252" cy="715" rx="155" ry="78" />
        <path d="m485 413 1117 381M1593 773l10 23-18 5" />
      </g>
      <g className="font-['Open_Sans'] text-[20px] font-bold">
        <text x="506" y="26" fill="#ff7f27">1</text>
        <text x="193" y="224" fill="#ff7f27">2</text>
        {letters.map(([l, x, y]) => (
          <text key={l} x={x} y={y} fill="#3f48cc">{l}</text>
        ))}
      </g>
    </svg>
  );
}

export default function App() {
  return (
    <div className="relative overflow-hidden bg-[#f2f2f2] font-['Liberation_Sans',sans-serif] text-[11px] text-black">
      <header className="flex">
        <div className="w-[82px] shrink-0 border-y border-r border-black bg-white" />
        <div className="min-w-0 flex-1">
          <MenuBar />
          <ToolBar />
        </div>
      </header>
      <main className="border-l-4 border-[#e4e4e4]">
        <div className="border-l border-[#b0b0b0] pb-1 pl-[2px]">
          <div className="border-l border-[#b0b0b0]">
            <TitleRow />
            <ChartHeader />
            <ChartArea />
          </div>
        </div>
      </main>
      <AlarmDialog />
      <div className="pointer-events-none absolute inset-x-0 top-[374px] flex gap-[84px] overflow-hidden whitespace-nowrap pl-[58px] font-['Open_Sans'] text-[232px] font-bold leading-[316px] text-black/5">
        <span>DEMO</span>
        <span>VERSION</span>
      </div>
      <Annotations />
    </div>
  );
}
